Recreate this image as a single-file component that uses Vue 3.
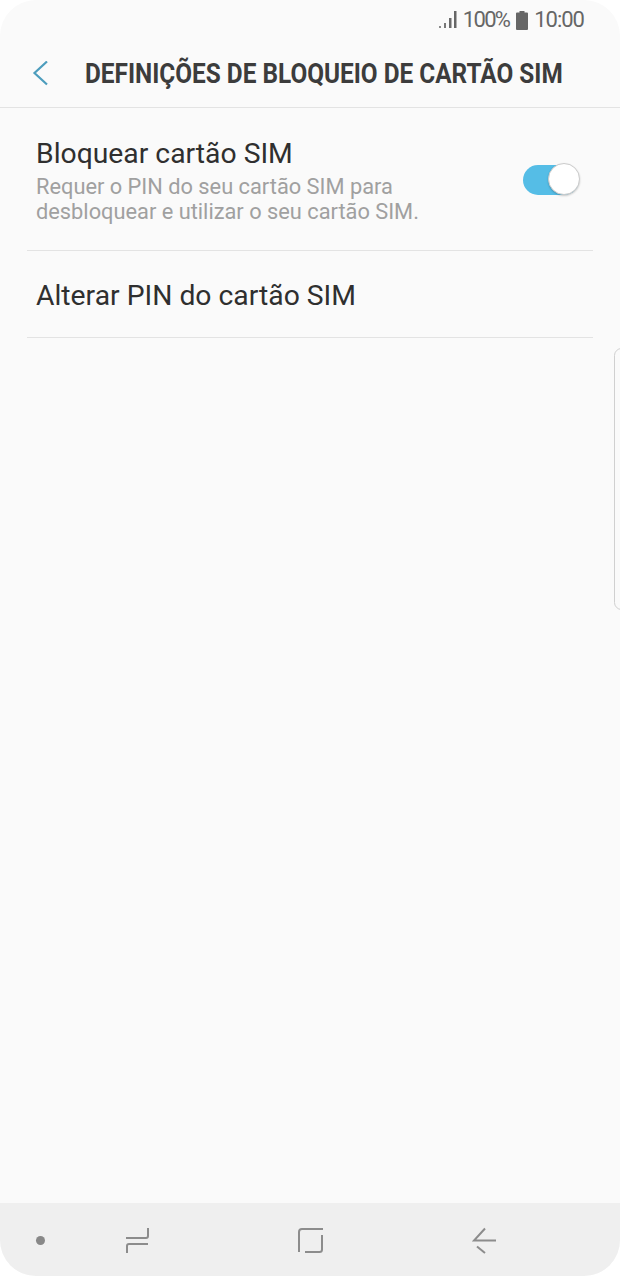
<template>
  <div class="phone">
    <div class="status">
      <svg class="signal" width="20" height="20" viewBox="0 0 20 20">
        <rect x="1" y="16" width="2" height="2" fill="#8a8a8a" />
        <rect x="6" y="13" width="2" height="5" fill="#777" />
        <rect x="11" y="8" width="2.500" height="10" fill="#6a6a6a" />
        <rect x="16" y="1" width="2.500" height="17" fill="#666" />
      </svg>
      <span class="status-text pct">100%</span>
      <svg class="battery" width="12" height="19" viewBox="0 0 12 19">
        <path d="M3.500 0h5v1.500H11a1 1 0 0 1 1 1V18a1 1 0 0 1-1 1H1a1 1 0 0 1-1-1V2.500a1 1 0 0 1 1-1h2.500z" fill="#666" />
      </svg>
      <span class="status-text">10:00</span>
    </div>

    <header class="header">
      <svg class="back" width="18" height="26" viewBox="0 0 18 26">
        <path d="M15 .5 2.500 12 15 23.500" fill="none" stroke="#4d9dbd" stroke-width="2.200" />
      </svg>
      <h1 class="title">DEFINIÇÕES DE BLOQUEIO DE CARTÃO SIM</h1>
    </header>

    <main class="list">
      <div class="row row-toggle">
        <div class="row-text">
          <div class="row-title">Bloquear cartão SIM</div>
          <div class="row-sub">Requer o PIN do seu cartão SIM para<br />desbloquear e utilizar o seu cartão SIM.</div>
        </div>
        <div class="toggle"><span class="knob"></span></div>
      </div>
      <div class="row row-plain">
        <div class="row-title">Alterar PIN do cartão SIM</div>
      </div>
    </main>

    <div class="edge"></div>

    <nav class="navbar">
      <span class="dot"></span>
      <svg class="nav-icon recent" width="26" height="28" viewBox="0 0 26 28">
        <path d="M23 2v8a2 2 0 0 1-2 2H1" fill="none" stroke="#8c8c8c" stroke-width="2" />
        <path d="M2 27v-7a2 2 0 0 1 2-2H23" fill="none" stroke="#8c8c8c" stroke-width="2" />
      </svg>
      <svg class="nav-icon home" width="26" height="26" viewBox="0 0 26 26">
        <path d="M25 2H4a3 3 0 0 0-3 3v20" fill="none" stroke="#8c8c8c" stroke-width="2" />
        <path d="M24 8v14.500a2.500 2.500 0 0 1-2.500 2.500H7" fill="none" stroke="#8c8c8c" stroke-width="2" />
      </svg>
      <svg class="nav-icon backarrow" width="26" height="28" viewBox="0 0 26 28">
        <path d="M13 1.500 2 13.500h22" fill="none" stroke="#8c8c8c" stroke-width="2" />
        <path d="M5 19.500l8 6.500" fill="none" stroke="#8c8c8c" stroke-width="2" />
      </svg>
    </nav>
  </div>
</template>

<script setup>
</script>

<style>
html,
body {
  margin: 0;
  background: #fff;
}
</style>

<style scoped>
.phone {
  width: 620px;
  height: 1276px;
  background: #fafafa;
  border-radius: 36px;
  display: flex;
  flex-direction: column;
  position: relative;
  overflow: hidden;
  font-family: Roboto, "Liberation Sans", sans-serif;
}

.status {
  height: 40px;
  display: flex;
  align-items: center;
  justify-content: flex-end;
  padding-right: 36px;
  color: #666;
  flex-shrink: 0;
}

.status-text {
  font-size: 22px;
  line-height: 40px;
  letter-spacing: -1px;
}

.pct {
  letter-spacing: -1.700px;
}

.signal {
  margin-right: 5px;
}

.battery {
  margin: 0 6px 0 7px;
}

.header {
  height: 67px;
  display: flex;
  align-items: center;
  border-bottom: 1px solid #e3e3e3;
  flex-shrink: 0;
}

.back {
  margin-left: 32px;
  margin-right: 35px;
  flex-shrink: 0;
}

.title {
  margin: 0;
  font-size: 28px;
  font-weight: 700;
  color: #3c3c3c;
  white-space: nowrap;
  flex-shrink: 0;
  transform: scaleX(0.87);
  transform-origin: left center;
}

.list {
  padding: 0 27px;
}

.row {
  border-bottom: 1px solid #e3e3e3;
  padding: 0 9px;
}

.row-toggle {
  height: 142px;
  display: flex;
  align-items: center;
  justify-content: space-between;
}

.row-text {
  margin-top: 2px;
}

.row-plain {
  height: 86px;
  display: flex;
  align-items: center;
}

.row-plain .row-title {
  margin-top: 3px;
}

.row-title {
  font-size: 28.300px;
  line-height: 34px;
  color: #2f2f2f;
}

.row-sub {
  font-size: 21.800px;
  line-height: 25px;
  color: #a0a0a0;
  margin-top: 3px;
}

.toggle {
  width: 56px;
  height: 30px;
  border-radius: 15px;
  background: #55bde6;
  position: relative;
  margin-top: 2px;
  margin-right: 5px;
}

.knob {
  position: absolute;
  right: -1px;
  top: -2px;
  width: 30px;
  height: 30px;
  border-radius: 50%;
  background: #fff;
  border: 1px solid #ccc;
  box-shadow: 0 1px 2px rgba(0, 0, 0, 0.2);
}

.edge {
  position: absolute;
  right: -9px;
  top: 348px;
  width: 13px;
  height: 260px;
  border: 1px solid #d0d0d0;
  border-radius: 8px;
}

.navbar {
  margin-top: auto;
  height: 73px;
  background: #efefef;
  position: relative;
  display: flex;
  align-items: center;
  flex-shrink: 0;
}

.dot {
  position: absolute;
  left: 36px;
  top: 33px;
  width: 9px;
  height: 9px;
  border-radius: 50%;
  background: #888;
}

.nav-icon {
  position: absolute;
}

.recent {
  left: 125px;
  top: 23px;
}

.home {
  left: 298px;
  top: 24px;
}

.backarrow {
  left: 472px;
  top: 24px;
}
</style>
